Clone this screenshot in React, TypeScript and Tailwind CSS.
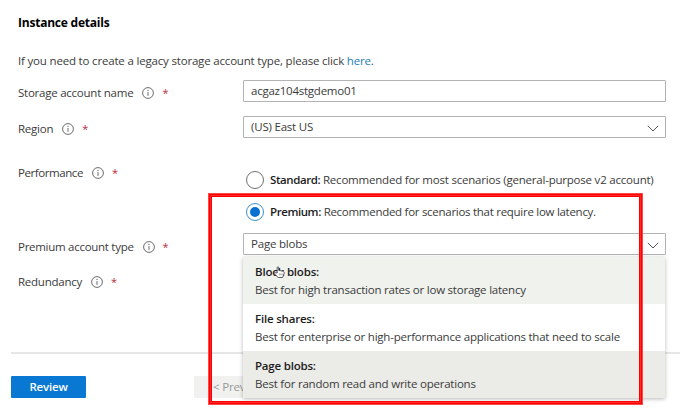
import React from "react";

function Info() {
  return (
    <svg className="h-[12px] w-[12px] shrink-0" viewBox="0 0 12 12" fill="none">
      <circle cx="6" cy="6" r="5.4" stroke="#5c5c5c" strokeWidth="0.9" />
      <path d="M6 5V8.9" stroke="#5c5c5c" strokeWidth="0.9" />
      <circle cx="6" cy="3.4" r="0.6" fill="#5c5c5c" />
    </svg>
  );
}

function Chevron() {
  return (
    <svg className="mt-[2px] h-[7px] w-[12px] shrink-0" viewBox="0 0 12 7" fill="none">
      <path d="M0.8 0.8L6 6L11.2 0.8" stroke="#555" strokeWidth="1" />
    </svg>
  );
}

function Label({
  text,
  offset = "pt-[4px]",
  tracking = "tracking-[-0.24px]",
}: {
  text: string;
  offset?: string;
  tracking?: string;
}) {
  return (
    <div className={`flex h-[22px] w-[225px] shrink-0 items-center ${offset}`}>
      <span className={tracking}>{text}</span>
      <span className="ml-[9px] flex">
        <Info />
      </span>
      <span className="ml-[8px] text-[11px] text-[#b5303c]">*</span>
    </div>
  );
}

function Radio({ checked = false }: { checked?: boolean }) {
  return (
    <span
      className={
        checked
          ? "flex h-[18px] w-[18px] shrink-0 items-center justify-center rounded-full border border-[#3b94c9]"
          : "flex h-[18px] w-[18px] shrink-0 rounded-full border border-[#707070]"
      }
    >
      {checked && <span className="h-[10px] w-[10px] rounded-full bg-[#0a70d0]" />}
    </span>
  );
}

const field =
  "flex h-[22px] w-[423px] items-center justify-between rounded-[1px] border border-[#b3b3b3] bg-white pl-[7px] pr-[6px]";

function Option({ title, text, bg }: { title: string; text: string; bg: string }) {
  return (
    <div className={`h-[47px] pl-[12px] pt-[6px] leading-[18px] ${bg}`}>
      <div className="font-semibold tracking-[-0.2px] text-[#1c1c1c]">{title}</div>
      <div className="tracking-[-0.22px]">{text}</div>
    </div>
  );
}

export default function App() {
  return (
    <div className="relative h-[410px] w-[680px] overflow-hidden whitespace-nowrap bg-white font-['Open_Sans',sans-serif] text-[11.5px] leading-[18px] tracking-[-0.2px] text-[#3b3b3b]">
      <div className="flex h-[352px] flex-col pl-[18px] pt-[14px]">
        <h2 className="text-[12px] font-bold leading-[18px] tracking-[-0.22px] text-black">
          <span>Instance details</span>
        </h2>
        <p className="mt-[20px] tracking-[-0.18px]">
          <span>If you need to create a legacy storage account type, please click </span>
          <span className="text-[#1b80bd]">here</span>.
        </p>
        <div className="mt-[10px] flex">
          <Label text="Storage account name" />
          <div className={field}>
            <span className="tracking-[-0.24px]">acgaz104stgdemo01</span>
          </div>
        </div>
        <div className="mt-[14px] flex">
          <Label text="Region" />
          <div className={field}>
            <span>(US) East US</span>
            <Chevron />
          </div>
        </div>
        <div className="mt-[24px] flex">
          <Label text="Performance" offset="pt-0" tracking="tracking-[-0.42px]" />
          <div className="flex flex-col gap-[14px] pl-[3px] pt-[9px]">
            <div className="flex h-[18px] items-center gap-[6px]">
              <Radio />
              <span className="tracking-[-0.21px]">
                <b className="font-semibold tracking-[-0.42px] text-[#1c1c1c]">Standard:</b>{" "}
                <span>Recommended for most scenarios (general-purpose v2 account)</span>
              </span>
            </div>
            <div className="flex h-[18px] items-center gap-[6px]">
              <Radio checked />
              <span className="tracking-[-0.28px]">
                <b className="font-semibold tracking-[-0.42px] text-[#1c1c1c]">Premium:</b>{" "}
                <span>Recommended for scenarios that require low latency.</span>
              </span>
            </div>
          </div>
        </div>
        <div className="mt-[12px] flex">
          <Label text="Premium account type" offset="pt-[6px]" tracking="tracking-[-0.28px]" />
          <div className={field}>
            <span>Page blobs</span>
            <Chevron />
          </div>
        </div>
        <div className="mt-[14px] flex">
          <Label text="Redundancy" offset="pt-[4px]" />
        </div>
      </div>
      <div className="ml-[11px] h-[2px] bg-[#e6e6e6]" />
      <div className="ml-[11px] mt-[22px] flex">
        <div className="flex h-[22px] w-[75px] items-center justify-center rounded-[1px] bg-[#0878d2] font-semibold text-white">
          Review
        </div>
        <div className="ml-[108px] flex h-[22px] w-[50px] items-center bg-[#f1f2f0] pl-[19px] text-[#999]">
          &lt; Prev
        </div>
      </div>

      <div className="absolute left-[243px] top-[257px] w-[422px] bg-white shadow-[0_1px_4px_rgba(0,0,0,0.28)]">
        <Option title="Block blobs:" text="Best for high transaction rates or low storage latency" bg="bg-[#f0f2ee]" />
        <Option title="File shares:" text="Best for enterprise or high-performance applications that need to scale" bg="bg-white" />
        <Option title="Page blobs:" text="Best for random read and write operations" bg="bg-[#ebebe8]" />
      </div>

      <svg className="absolute left-[273px] top-[266px] h-[12px] w-[12px]" viewBox="0 0 12 12">
        <path
          d="M4.2 7V1.6c0-1.1 1.5-1.1 1.5 0v2.7l4.2.9c.9.2 1.4.8 1.3 1.7l-.8 2.9-.9 1.7H5.2L1.4 7.8c-.6-.9.5-1.7 1.3-1.1z"
          fill="#fff"
          stroke="#333"
          strokeWidth="0.8"
        />
        <path d="M6.3 7.4v2M7.8 7.4v2M9.2 7.4v2" stroke="#555" strokeWidth="0.5" />
      </svg>
      <div className="absolute left-[208px] top-[193px] h-[212px] w-[435px] shadow-[inset_0_0_0_1px_#ff4a4a,inset_0_0_0_2px_#ff0000,inset_0_0_0_3px_#ff2828,inset_0_0_0_4px_#ff0000]" />
    </div>
  );
}
